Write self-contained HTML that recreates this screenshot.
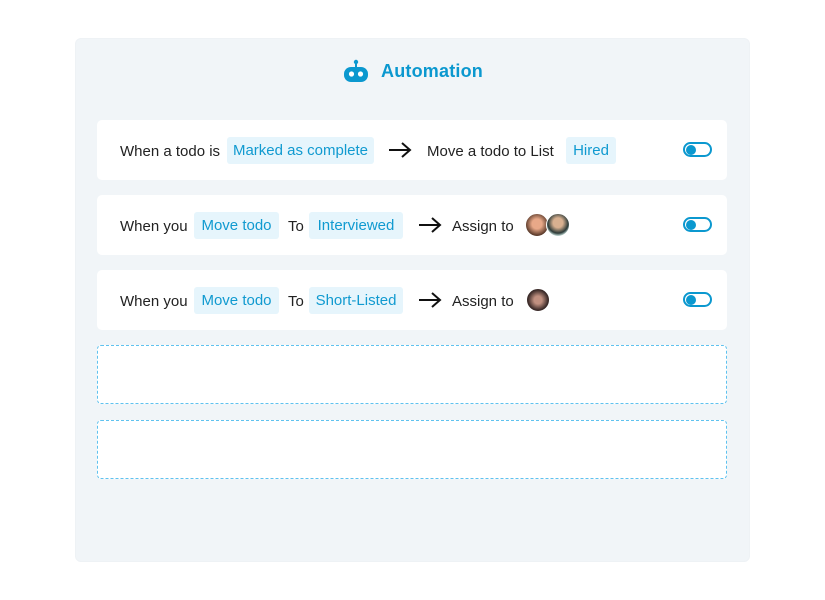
<!DOCTYPE html><html><head><style>
*{margin:0;padding:0;box-sizing:border-box}
body{width:825px;height:600px;background:#fff;font-family:"Liberation Sans",sans-serif;position:relative;overflow:hidden}
.panel{position:absolute;left:75px;top:38px;width:675px;height:524px;background:#f1f5f8;border-radius:6px;border:1px solid #eef2f5}
.row{position:absolute;left:97px;width:630px;height:60px;background:#fff;border-radius:5px}
.dash{position:absolute;left:97px;width:630px;height:59px;border:1.5px dashed #5fc2ef;border-radius:4px;background:#fff}
.t{position:absolute;top:1px;line-height:61px;font-size:15px;color:#222;white-space:nowrap}
.c{position:absolute;top:17px;height:27px;line-height:28px;background:#e6f5fc;color:#109ad0;font-size:15px;border-radius:3px;text-align:center;white-space:nowrap}
.ar{position:absolute;top:20px}
.tg{position:absolute;left:586px;top:22px;width:29px;height:15px;border:2px solid #0b98cf;border-radius:8px}
.tg::after{content:"";position:absolute;left:1px;top:0.5px;width:10px;height:10px;border-radius:50%;background:#0b98cf}
.av{position:absolute;top:18px;width:24px;height:24px;border-radius:50%;border:1px solid #fff}
</style></head><body>
<div class="panel"></div>
<svg style="position:absolute;left:343px;top:59px" width="26" height="24" viewBox="0 0 26 24"><circle cx="13" cy="3" r="2.2" fill="#0b98cf"/><rect x="12" y="3" width="2" height="5" fill="#0b98cf"/><rect x="1" y="8" width="24" height="15" rx="7" fill="#0b98cf"/><circle cx="8.5" cy="15" r="2.6" fill="#fff"/><circle cx="17.5" cy="15" r="2.6" fill="#fff"/></svg>
<div style="position:absolute;left:381px;top:61px;font-size:18px;color:#0b98cf;font-weight:bold;letter-spacing:0.2px">Automation</div>

<div class="row" style="top:120px">
<span class="t" style="left:23px">When a todo is</span>
<span class="c" style="left:130px;width:147px">Marked as complete</span>
<svg class="ar" style="left:291px" width="24" height="20" viewBox="0 0 24 20"><path d="M1 10H22M14 3l8 7-8 7" stroke="#111" stroke-width="2" fill="none"/></svg>
<span class="t" style="left:330px">Move a todo to List</span>
<span class="c" style="left:469px;width:50px">Hired</span>
<div class="tg"></div></div>

<div class="row" style="top:195px">
<span class="t" style="left:23px">When you</span>
<span class="c" style="left:97px;width:85px">Move todo</span>
<span class="t" style="left:191px">To</span>
<span class="c" style="left:212px;width:94px">Interviewed</span>
<svg class="ar" style="left:321px" width="24" height="20" viewBox="0 0 24 20"><path d="M1 10H22M14 3l8 7-8 7" stroke="#111" stroke-width="2" fill="none"/></svg>
<span class="t" style="left:355px">Assign to</span>
<div class="av" style="left:428px;background:radial-gradient(circle at 50% 45%,#e8a888 30%,#5a3a2a 70%)"></div>
<div class="av" style="left:449px;background:radial-gradient(circle at 50% 40%,#d8b090 28%,#2c3a38 60%,#b8d0cc 75%)"></div>
<div class="tg"></div></div>

<div class="row" style="top:270px">
<span class="t" style="left:23px">When you</span>
<span class="c" style="left:97px;width:85px">Move todo</span>
<span class="t" style="left:191px">To</span>
<span class="c" style="left:212px;width:94px">Short-Listed</span>
<svg class="ar" style="left:321px" width="24" height="20" viewBox="0 0 24 20"><path d="M1 10H22M14 3l8 7-8 7" stroke="#111" stroke-width="2" fill="none"/></svg>
<span class="t" style="left:355px">Assign to</span>
<div class="av" style="left:429px;background:radial-gradient(circle at 50% 50%,#c09080 25%,#3a2a28 65%)"></div>
<div class="tg"></div></div>

<div class="dash" style="top:345px"></div>
<div class="dash" style="top:420px"></div>
</body></html>
